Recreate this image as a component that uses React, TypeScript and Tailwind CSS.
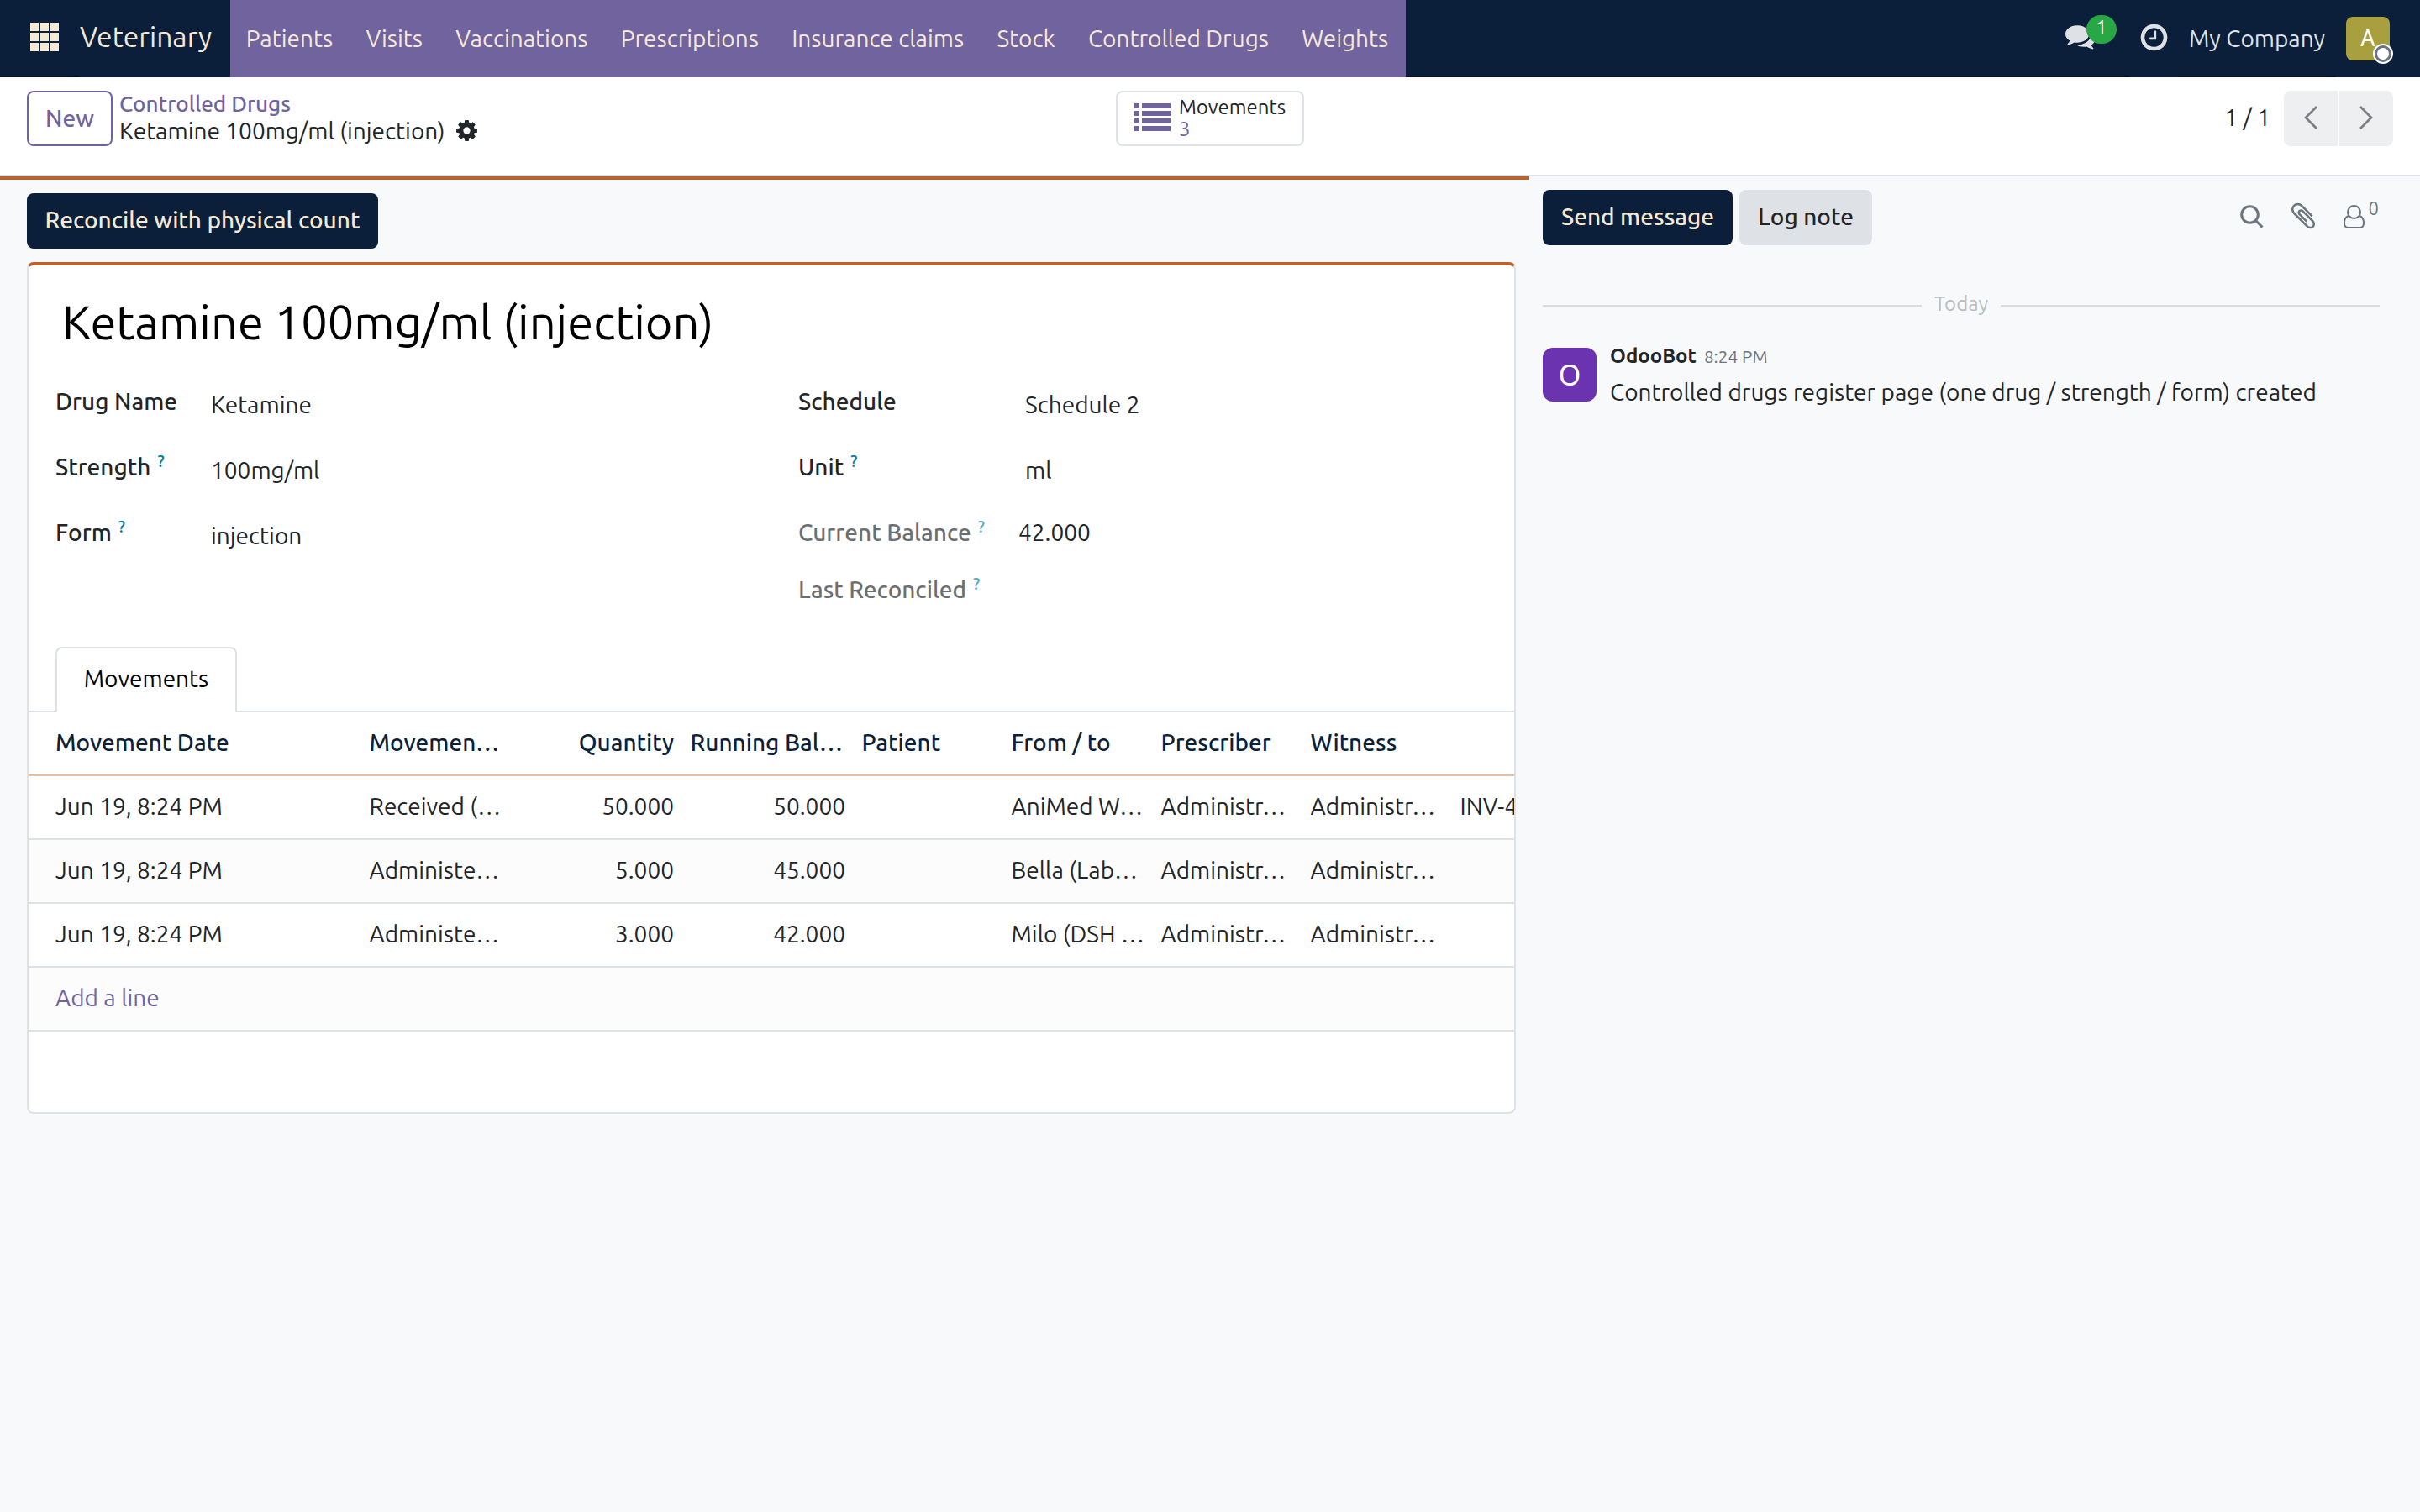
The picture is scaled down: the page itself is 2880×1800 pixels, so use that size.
import { ReactNode } from "react";

const menus = ["Patients", "Visits", "Vaccinations", "Prescriptions", "Insurance claims", "Stock", "Controlled Drugs", "Weights"];

const columns = ["Movement Date", "Movemen…", "Quantity", "Running Bal…", "Patient", "From / to", "Prescriber", "Witness", ""];

const rows = [
  ["Jun 19, 8:24 PM", "Received (…", "50.000", "50.000", "", "AniMed W…", "Administr…", "Administr…", "INV-4"],
  ["Jun 19, 8:24 PM", "Administe…", "5.000", "45.000", "", "Bella (Lab…", "Administr…", "Administr…", ""],
  ["Jun 19, 8:24 PM", "Administe…", "3.000", "42.000", "", "Milo (DSH …", "Administr…", "Administr…", ""],
];

const COG =
  "M1152 896q0-106-75-181t-181-75-181 75-75 181 75 181 181 75 181-75 75-181zm512-109v222q0 12-8 23t-20 13l-185 28q-19 54-39 91 35 50 107 138 10 12 10 25t-9 23q-27 37-99 108t-94 71q-12 0-26-9l-138-108q-44 23-91 38-16 136-29 186-7 28-36 28h-222q-14 0-24.5-8.500t-11.500-21.500l-28-184q-49-16-90-37l-141 107q-10 9-25 9-14 0-25-11-126-114-165-168-7-10-7-23 0-12 8-23 15-21 51-66.500t54-70.500q-27-50-41-99l-183-27q-13-2-21-12.500t-8-23.500v-222q0-12 8-23t19-13l186-28q14-46 39-92-40-57-107-138-10-12-10-24 0-10 9-23 26-36 98.500-107.500t94.500-71.500q13 0 26 10l138 107q44-23 91-38 16-136 29-186 7-28 36-28h222q14 0 24.500 8.500t11.500 21.500l28 184q49 16 90 37l142-107q9-9 24-9 13 0 25 10 129 119 165 170 7 8 7 22 0 12-8 23-15 21-51 66.500t-54 70.500q26 50 41 98l183 28q13 2 21 12.500t8 23.500z";
const COMMENTS =
  "M1408 768q0 139-94 257t-256.500 186.500-353.500 68.500q-86 0-176-16-124 88-278 128-36 9-86 16h-3q-11 0-20.500-8t-11.500-21q-1-3-1-6.500t.5-6.500 2-6l2.500-5 3.500-5.500 4-5 4.500-5 4-4.500q5-6 23-25t26-29.500 22.500-29 25-38.500 20.500-44q-124-72-195-177t-71-224q0-139 94-257t256.500-186.500 353.500-68.500 353.500 68.500 256.500 186.500 94 257zm384 256q0 120-71 224.500t-195 176.500q10 24 20.500 44t25 38.500 22.500 29 26 29.500 23 25q1 1 4 4.500t4.500 5 4 5 3.500 5.500l2.500 5 2 6 .5 6.500-1 6.500q-3 14-13 22t-22 7q-50-7-86-16-154-40-278-128-90 16-176 16-271 0-472-132 58 4 88 4 161 0 309-45t264-129q125-92 192-212t67-254q0-77-23-152 129 71 204 178t75 230z";
const CLOCK =
  "M1024 544v448q0 14-9 23t-23 9h-320q-14 0-23-9t-9-23v-64q0-14 9-23t23-9h224v-352q0-14 9-23t23-9h64q14 0 23 9t9 23zm416 352q0-148-73-273t-198-198-273-73-273 73-198 198-73 273 73 273 198 198 273 73 273-73 198-198 73-273zm224 0q0 209-103 385.500t-279.500 279.500-385.500 103-385.500-103-279.500-279.500-103-385.500 103-385.500 279.500-279.500 385.500-103 385.500 103 279.500 279.500 103 385.500z";
const PAPERCLIP =
  "M1596 1385q0 117-79 196t-196 79q-135 0-235-100l-777-776q-113-115-113-271 0-159 110-270t269-111q158 0 273 113l605 606q10 10 10 22 0 16-30.500 46.500t-46.500 30.500q-13 0-23-10l-606-607q-79-77-181-77-106 0-179 75t-73 181q0 105 76 181l776 777q63 63 145 63 64 0 106-42t42-106q0-82-63-145l-581-581q-26-24-60-24-29 0-48 19t-19 48q0 32 25 59l410 410q10 10 10 22 0 16-31 47t-47 31q-12 0-22-10l-410-410q-63-61-63-149 0-82 57-139t139-57q88 0 149 63l581 581q100 98 100 235z";

function Icon({ d, className }: { d: string; className: string }) {
  return (
    <svg viewBox="0 0 1792 1792" fill="currentColor" className={className}>
      <path d={d} />
    </svg>
  );
}

function Help() {
  return <sup className="relative top-[-10px] ml-2 text-[20px] font-medium leading-none text-[#017e9f] align-baseline">?</sup>;
}

function Label({ children, help, muted }: { children: ReactNode; help?: boolean; muted?: boolean }) {
  return (
    <div className={`font-medium leading-[42px] ${muted ? "opacity-[.66]" : ""}`}>
      {children}
      {help && <Help />}
    </div>
  );
}

function Navbar() {
  return (
    <header className="flex h-[92px] bg-[#0b1f3a] text-[#f5e9d5]">
      <div className="w-[94px] border-b-2 border-[#04101f] pl-9 pt-[27px]">
        <svg viewBox="0 0 34 34" className="size-[34px]" fill="currentColor">
          {[0, 12, 24].map((y) => [0, 12, 24].map((x) => <rect key={`${x}-${y}`} x={x} y={y} width="10" height="10" />))}
        </svg>
      </div>
      <span className="w-[180px] pl-px pt-[23px] text-[33.6px] leading-[42px]">Veterinary</span>
      <nav className="flex bg-[#71639e]">
        {menus.map((menu) => (
          <a key={menu} className="pl-[18.8px] pr-[20.5px] pt-[25px] leading-[42px]">
            {menu}
          </a>
        ))}
      </nav>
      <div className="flex-1 border-b-2 border-[#04101f]" />
      <div className="flex pr-9 text-[#dee2e6]">
        <div className="relative w-[76px] border-b-2 border-[#04101f]">
          <Icon d={COMMENTS} className="mt-[25px] size-[36px]" />
          <span className="absolute left-[25px] top-[18px] flex h-[34px] w-9 items-center justify-center rounded-full bg-[#28a745] pb-[7px] text-[22px] text-white">
            1
          </span>
        </div>
        <Icon d={CLOCK} className="ml-[11px] mr-[10px] mt-[26px] size-[37px]" />
        <span className="w-[188px] border-b-2 border-[#04101f] pl-[13px] pt-[25px] leading-[42px]">My Company</span>
        <div className="relative ml-3 mt-5 flex size-[52px] items-center justify-center rounded-lg bg-[#a8a03e] pb-px font-['Noto_Sans'] text-[27px] text-white">
          A
          <span className="absolute -bottom-1 -right-1 size-6 rounded-full bg-white p-0.5">
            <span className="block size-5 rounded-full border-[3px] border-[#6c757d]" />
          </span>
        </div>
      </div>
    </header>
  );
}

function ControlPanel() {
  return (
    <div className="flex h-[118px] items-start border-b-2 border-[#dee2e6] bg-white px-8 pt-4">
      <div className="flex w-[1296px]">
        <button className="mr-2 h-[66px] w-[102px] rounded-lg border-2 border-[#71639e] pb-px font-medium text-[#71639e]">New</button>
        <div>
          <div className="text-[26px] font-medium leading-[31px] text-[#71639e]">Controlled Drugs</div>
          <div className="flex items-center leading-[34px]">
            Ketamine 100mg/ml (injection)
            <Icon d={COG} className="mb-px ml-[11px] size-[29px]" />
          </div>
        </div>
      </div>
      <div className="flex h-[66px] w-56 rounded-lg border-2 border-[#dee2e6] pl-5">
        <svg viewBox="0 0 43 33" className="mr-[10px] mt-[13px] h-[33px] w-[43px]" fill="#71639e">
          {[0, 9, 18, 27].map((y) => (
            <g key={y}>
              <rect x="0" y={y} width="6" height="6" />
              <rect x="9" y={y} width="34" height="6" />
            </g>
          ))}
        </svg>
        <div className="pt-[5px] text-[24px] leading-[26px]">
          <div>Movements</div>
          <div className="text-[#71639e]">3</div>
        </div>
      </div>
      <div className="ml-auto flex">
        <span className="mr-4 pt-[11px] leading-[42px]">1 / 1</span>
        <div className="flex gap-0.5 text-[#7c7f83]">
          <button className="flex h-[66px] w-16 items-center justify-center rounded-l-lg bg-[#eeeff1]">
            <svg viewBox="0 0 16 28" className="mb-0.5 h-7 w-4" fill="none" stroke="currentColor" strokeWidth="2.8">
              <path d="M15 1L2 14l13 13" />
            </svg>
          </button>
          <button className="flex h-[66px] w-16 items-center justify-center rounded-r-lg bg-[#eeeff1]">
            <svg viewBox="0 0 16 28" className="mb-0.5 h-7 w-4" fill="none" stroke="currentColor" strokeWidth="2.8">
              <path d="M1 1l13 13L1 27" />
            </svg>
          </button>
        </div>
      </div>
    </div>
  );
}

function TableRow({ cells, header, striped }: { cells: string[]; header?: boolean; striped?: boolean }) {
  return (
    <div
      className={`grid h-[76px] w-[1870px] grid-cols-[395px_180px_202px_204px_178px_178px_178px_178px_178px] border-b-2 pt-[15px] leading-[42px] whitespace-nowrap ${
        header ? "border-[#e3bfa5] font-medium text-[#0b1f3a]" : "border-[#dee2e6]"
      } ${striped ? "bg-[#fcfcfc]" : ""}`}
    >
      {cells.map((cell, i) => (
        <div key={i} className={i === 0 ? "pl-8" : i === 2 || (i === 3 && !header) ? "pr-[9px] text-right" : "pl-[10.5px]"}>
          {cell}
        </div>
      ))}
    </div>
  );
}

function Sheet() {
  return (
    <div className="mt-4 h-[1014px] overflow-hidden rounded-lg border-2 border-t-4 border-[#dee2e6] border-t-[#bb622c] bg-white">
      <h1 className="mt-[34px] pl-10 text-[56px] leading-[67px] text-black">Ketamine 100mg/ml (injection)</h1>
      <div className="mt-10 flex h-[313px] pl-8">
        <div className="grid w-[884px] auto-rows-[78px] grid-cols-[185px_1fr]">
          <Label>Drug Name</Label>
          <div className="pt-1 leading-[42px]">Ketamine</div>
          <Label help>Strength</Label>
          <div className="pt-1 leading-[42px]">100mg/ml</div>
          <Label help>Form</Label>
          <div className="pt-1 leading-[42px]">injection</div>
        </div>
        <div className="grid w-[800px] grid-cols-[262px_1fr] grid-rows-[78px_78px_68px_68px]">
          <Label>Schedule</Label>
          <div className="pl-2 pt-1 leading-[42px]">Schedule 2</div>
          <Label help>Unit</Label>
          <div className="pl-2 pt-1 leading-[42px]">ml</div>
          <Label help muted>Current Balance</Label>
          <div className="leading-[42px]">42.000</div>
          <Label help muted>Last Reconciled</Label>
        </div>
      </div>
      <div className="flex h-[78px] items-stretch">
        <div className="w-8 border-b-2 border-[#dee2e6]" />
        <div className="w-[216px] rounded-t-lg border-2 border-b-0 border-[#dee2e6] pt-[15px] text-center leading-[42px] text-black">
          Movements
        </div>
        <div className="flex-1 border-b-2 border-[#dee2e6]" />
      </div>
      <TableRow cells={columns} header />
      {rows.map((cells, i) => (
        <TableRow key={i} cells={cells} striped={i % 2 === 1} />
      ))}
      <div className="h-[76px] border-b-2 border-[#dee2e6] bg-[#fcfcfc] pl-8 pt-[15px] leading-[42px] text-[#71639e]">Add a line</div>
    </div>
  );
}

function Chatter() {
  return (
    <aside className="w-[1060px] pl-4 pr-12 pt-4">
      <div className="flex h-[66px] items-start">
        <button className="mr-2 h-full w-[226px] rounded-lg bg-[#0b1f3a] pb-0.5 font-medium text-[#f5e9d5]">Send message</button>
        <button className="h-full w-[158px] rounded-lg bg-[#dee2e6] pb-0.5 font-medium">Log note</button>
        <div className="ml-auto mt-[14px] flex text-[#6c757d]">
          <svg viewBox="0 0 28 28" className="mr-[29px] mt-1 size-7" fill="none" stroke="currentColor" strokeWidth="3">
            <circle cx="11.5" cy="11.5" r="9.8" />
            <path d="M18.5 18.5l8 8" />
          </svg>
          <Icon d={PAPERCLIP} className="-mt-px mr-[30px] size-[36px]" />
          <svg viewBox="0 0 25 28" className="mt-1 h-7 w-[25px]" fill="none" stroke="currentColor" strokeWidth="2">
            <circle cx="12.5" cy="8.5" r="7.5" />
            <path d="M6 13c-3.500 1-5 4.500-5 8.500 0 4 1.500 5.500 4.500 5.500h14c3 0 4.500-1.500 4.500-5.500 0-4-1.500-7.500-5-8.500" />
          </svg>
          <span className="-mt-1 ml-[5px] mr-px text-[22px] leading-6">0</span>
        </div>
      </div>
      <div className="mt-[52px] flex items-center text-[24px] leading-9 text-[#b8bcc0]">
        <div className="mt-1 h-0.5 flex-1 bg-[#d9dbde]" />
        <span className="px-[15px]">Today</span>
        <div className="mt-1 h-0.5 flex-1 bg-[#d9dbde]" />
      </div>
      <div className="mt-6 flex">
        <div className="mr-4 mt-[10px] flex size-16 items-center justify-center rounded-xl bg-[#6c33b0] pb-px font-['Noto_Sans'] text-[34px] leading-none text-white">
          O
        </div>
        <div>
          <div className="leading-[36px]">
            <span className="text-[24px] font-bold">OdooBot</span>
            <span className="ml-[9px] text-[20.8px] text-[#6c757d]">8:24 PM</span>
          </div>
          <div className="mt-[3px] leading-[42px]">Controlled drugs register page (one drug / strength / form) created</div>
        </div>
      </div>
    </aside>
  );
}

export default function App() {
  return (
    <div className="h-[1800px] w-[2880px] overflow-hidden bg-[#f8f9fb] font-['Ubuntu','Noto_Sans',sans-serif] text-[28px] text-[#212529]">
      <Navbar />
      <ControlPanel />
      <div className="flex">
        <main className="w-[1820px] border-t-4 border-[#bb622c] pl-8 pr-4 pt-4">
          <button className="block h-[66px] w-[418px] rounded-lg bg-[#0b1f3a] pb-0.5 font-medium text-[#f5e9d5]">
            Reconcile with physical count
          </button>
          <Sheet />
        </main>
        <Chatter />
      </div>
    </div>
  );
}
